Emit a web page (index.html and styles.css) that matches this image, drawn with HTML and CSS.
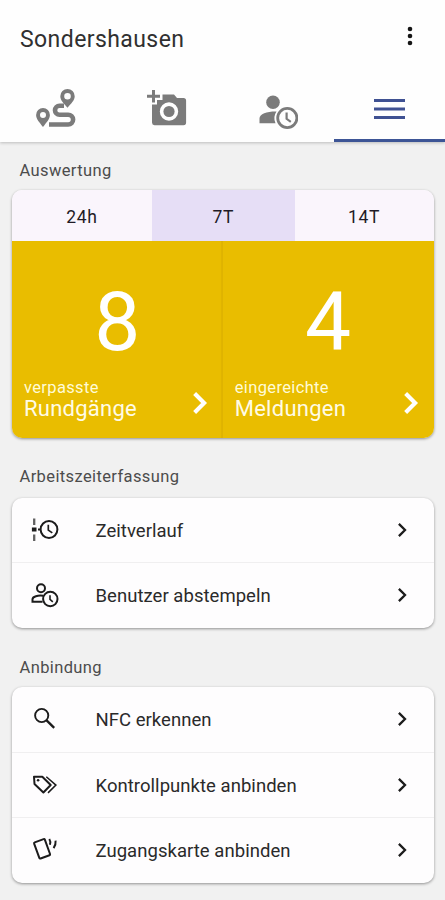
FILE: index.html
```html
<!DOCTYPE html>
<html lang="de">
<head>
<meta charset="utf-8">
<title>Sondershausen</title>
<link rel="stylesheet" href="styles.css">
</head>
<body>
<svg class="defs" width="0" height="0" aria-hidden="true">
  <symbol id="chevron" viewBox="0 0 24 24"><path d="M7.500 5.300 14.200 12 7.500 18.700" fill="none" stroke="currentColor"/></symbol>
</svg>
<header class="app-header">
  <div class="title-bar">
    <h1 class="title">Sondershausen</h1>
    <svg class="more" viewBox="0 0 8 22"><circle cx="4" cy="4" r="2.300"/><circle cx="4" cy="11" r="2.300"/><circle cx="4" cy="18" r="2.300"/></svg>
  </div>
  <nav class="tabs">
    <a class="tab">
      <svg class="tab-icon" viewBox="0 0 40 40" fill="currentColor">
        <path fill-rule="evenodd" d="M31.500 0a7.200 7.200 0 0 0-7.200 7.200c0 4.300 3.800 7.300 7.200 11.600 3.400-4.300 7.200-7.300 7.200-11.600A7.200 7.200 0 0 0 31.500 0zm0 4a3.300 3.300 0 1 1 0 6.600 3.300 3.300 0 0 1 0-6.600z"/>
        <path fill-rule="evenodd" d="M7 19a6.900 6.900 0 0 0-6.900 6.900c0 4.200 3.600 7.500 6.900 12.100 3.300-4.600 6.900-7.900 6.900-12.100A6.900 6.900 0 0 0 7 19zm0 3.900a3 3 0 1 1 0 6 3 3 0 0 1 0-6z"/>
        <path d="M28 16.700H23.500a4.500 4.500 0 0 0 0 9H32.200a4.900 4.900 0 0 1 0 9.800H13" fill="none" stroke="currentColor" stroke-width="4.600"/>
      </svg>
    </a>
    <a class="tab">
      <svg class="tab-icon" viewBox="0 0 40 40" fill="currentColor">
        <path d="M6.500 1v12.500M0 7.200h13" fill="none" stroke="currentColor" stroke-width="3"/>
        <path fill-rule="evenodd" d="M15.500 5.500H27l3 3.500h6.500a2.600 2.600 0 0 1 2.600 2.600v22a2.600 2.600 0 0 1-2.600 2.600h-29A2.600 2.600 0 0 1 5 33.600V15.500h5V11h5.500zM22 13.300a9.200 9.200 0 1 0 0 18.400 9.200 9.200 0 0 0 0-18.400z"/>
        <circle cx="22" cy="22.500" r="5.600"/>
      </svg>
    </a>
    <a class="tab">
      <svg class="tab-icon" viewBox="-1 0 40 40" fill="currentColor">
        <circle cx="14" cy="13.300" r="6.800"/>
        <path d="M.5 34.200v-4.600c0-5 8-7.400 17-7.200a12 12 0 0 0-1 11.800z"/>
        <circle cx="28.300" cy="29" r="9.600" fill="none" stroke="currentColor" stroke-width="2.800"/>
        <path d="M27.600 23.500v6.300l4.200 3" fill="none" stroke="currentColor" stroke-width="2.200"/>
      </svg>
    </a>
    <a class="tab active">
      <svg class="tab-icon" viewBox="0 0 40 40"><path d="M5 11.500h31M5 20h31M5 28.500h31" stroke="currentColor" stroke-width="2.900"/></svg>
    </a>
  </nav>
</header>
<main class="content">
  <h2 class="section-title first">Auswertung</h2>
  <section class="card">
    <div class="segments">
      <button class="segment">24h</button>
      <button class="segment selected">7T</button>
      <button class="segment">14T</button>
    </div>
    <div class="stats">
      <div class="stat">
        <div class="number">8</div>
        <div class="stat-foot">
          <div><div class="stat-sub">verpasste</div><div class="stat-name">Rundgänge</div></div>
          <svg class="stat-chevron"><use href="#chevron"/></svg>
        </div>
      </div>
      <div class="stat">
        <div class="number">4</div>
        <div class="stat-foot">
          <div><div class="stat-sub">eingereichte</div><div class="stat-name">Meldungen</div></div>
          <svg class="stat-chevron"><use href="#chevron"/></svg>
        </div>
      </div>
    </div>
  </section>

  <h2 class="section-title">Arbeitszeiterfassung</h2>
  <section class="card">
    <div class="row">
      <svg class="row-icon" viewBox="0 0 28 28" fill="none" stroke="currentColor" stroke-width="2">
        <path d="M3.200 2.500v6.500M3.200 18.500v6.500" stroke-width="2.300" stroke-opacity=".7"/><path d="M.9 13.600h4.600" stroke-width="4"/><path d="M7 13.600h3"/>
        <circle cx="18" cy="13.500" r="8.400"/><path d="M17.300 8.800v5.300l4 2.800" stroke-width="1.700"/>
      </svg>
      <span class="row-text">Zeitverlauf</span>
      <svg class="row-chevron"><use href="#chevron"/></svg>
    </div>
    <div class="row">
      <svg class="row-icon" viewBox="0 0 28 28" fill="none" stroke="currentColor" stroke-width="2">
        <circle cx="10" cy="7.300" r="4"/><path d="M11.500 20.800H1.500v-2.600c0-2.700 5.500-4.100 10.700-3.400"/>
        <circle cx="19.300" cy="18" r="7.200"/><path d="M19 14.200v4.200l2.800 2.400" stroke-width="1.600"/>
      </svg>
      <span class="row-text">Benutzer abstempeln</span>
      <svg class="row-chevron"><use href="#chevron"/></svg>
    </div>
  </section>

  <h2 class="section-title last">Anbindung</h2>
  <section class="card">
    <div class="row">
      <svg class="row-icon" viewBox="0 0 28 28" fill="none" stroke="currentColor" stroke-width="1.900">
        <circle cx="10.700" cy="10.500" r="6.600"/><path d="m15.600 15.400 7.600 7.400" stroke-width="2.400"/>
      </svg>
      <span class="row-text">NFC erkennen</span>
      <svg class="row-chevron"><use href="#chevron"/></svg>
    </div>
    <div class="row">
      <svg class="row-icon" viewBox="0 0 28 28" fill="none" stroke="currentColor" stroke-width="2">
        <path d="M3 5.800h8.300l8.400 8.200-7.300 7.500L3.500 13z" stroke-linejoin="round"/><circle cx="7.100" cy="9.300" r="1.300" fill="currentColor" stroke="none"/>
        <path d="m15.300 5.800 9.600 8.300-7.900 7.800" stroke-width="1.500"/>
      </svg>
      <span class="row-text">Kontrollpunkte anbinden</span>
      <svg class="row-chevron"><use href="#chevron"/></svg>
    </div>
    <div class="row">
      <svg class="row-icon" viewBox="0 0 28 28" fill="none" stroke="currentColor" stroke-width="2">
        <rect x="5.400" y="4.300" width="11.400" height="17.200" rx="1" transform="rotate(-20 10.800 12.900)"/>
        <path d="M18.300 3c1.200 1.800 1.200 3.800.6 5.800M24.600 4.600c.3 3.200-.4 5.400-2 7.600"/>
      </svg>
      <span class="row-text">Zugangskarte anbinden</span>
      <svg class="row-chevron"><use href="#chevron"/></svg>
    </div>
  </section>
</main>
</body>
</html>
```
FILE: styles.css
```css
* { box-sizing: border-box; }
body {
  margin: 0;
  height: 900px;
  overflow: hidden;
  background: #f1f1f1;
  color: #1d1b20;
  font-family: Roboto, "Liberation Sans", sans-serif;
}
.defs { display: block; }
svg { flex: none; }
.app-header {
  height: 142px;
  background: #fefefe;
  box-shadow: 0 1px 3px rgba(0, 0, 0, .22);
}
.title-bar {
  height: 76px;
  padding: 25px 31px 0 20px;
  display: flex;
  align-items: flex-start;
  justify-content: space-between;
}
.title {
  margin: 0;
  font-size: 23px;
  line-height: 30px;
  font-weight: 400;
  letter-spacing: .42px;
  color: #303030;
}
.more { width: 8px; height: 22px; fill: #161616; }
.tabs { display: grid; grid-template-columns: repeat(4, 1fr); height: 66px; }
.tab {
  display: flex;
  justify-content: center;
  padding-top: 13px;
  color: #7b7b7b;
  border-bottom: 3px solid transparent;
}
.tab.active { color: #3f5192; border-color: #3d5596; }
.tab-icon { width: 40px; height: 40px; }
.content { padding: 11px 11.500px 0 12px; }
.section-title {
  margin: 0 0 3px;
  padding: 4.500px 0 0 7.500px;
  height: 34px;
  font-size: 16.500px;
  line-height: 24px;
  font-weight: 400;
  letter-spacing: .38px;
  color: #4c4c4c;
}
.section-title.first { padding-top: 6px; }
.section-title.last { padding-top: 5.500px; }
.card {
  margin-bottom: 22.500px;
  border-radius: 10px;
  overflow: hidden;
  background: #fefdfe;
  box-shadow: 0 1px 3px rgba(0, 0, 0, .4);
}
.segments { display: grid; grid-template-columns: 140px 142.500px 1fr; height: 51px; }
.segment {
  padding: 2px 0 0;
  border: 0;
  background: #faf5fc;
  color: #1f1b26;
  font: 400 17.500px Roboto, sans-serif;
  letter-spacing: .7px;
}
.segment.selected { background: #e6def6; }
.stats { display: grid; grid-template-columns: 1fr 1fr; height: 197px; background: #e9bd00; color: #fff; }
.stat { padding: 33px 12px 0; display: flex; flex-direction: column; }
.stat:first-child { box-shadow: inset -2px 0 1px #dfb300; }
.number { text-align: center; font-size: 82px; line-height: 96px; }
.stat-foot { display: flex; justify-content: space-between; margin-top: 8px; }
.stat-sub { font-size: 16.500px; line-height: 20px; letter-spacing: .35px; color: #fffbd6; }
.stat-name { font-size: 22px; line-height: 22px; letter-spacing: .25px; color: #fffbe6; }
.stat-chevron { width: 34px; height: 34px; margin: 8px -7px 0 0; stroke-width: 2.900; }
.row { height: 65.500px; padding: 0 20px 0 18.500px; display: flex; align-items: center; }
.row:first-child { height: 64.500px; }
.row + .row { border-top: 1.500px solid #f0eff0; }
.row-icon { width: 28px; height: 28px; color: #1c1c1c; }
.row-text { margin-left: 37px; padding-top: 2px; flex: 1; font-size: 18.500px; line-height: 24px; letter-spacing: .04px; color: #2a2a2a; }
.row-chevron { width: 22px; height: 22px; color: #1c1c1c; stroke-width: 2.500; }
```
